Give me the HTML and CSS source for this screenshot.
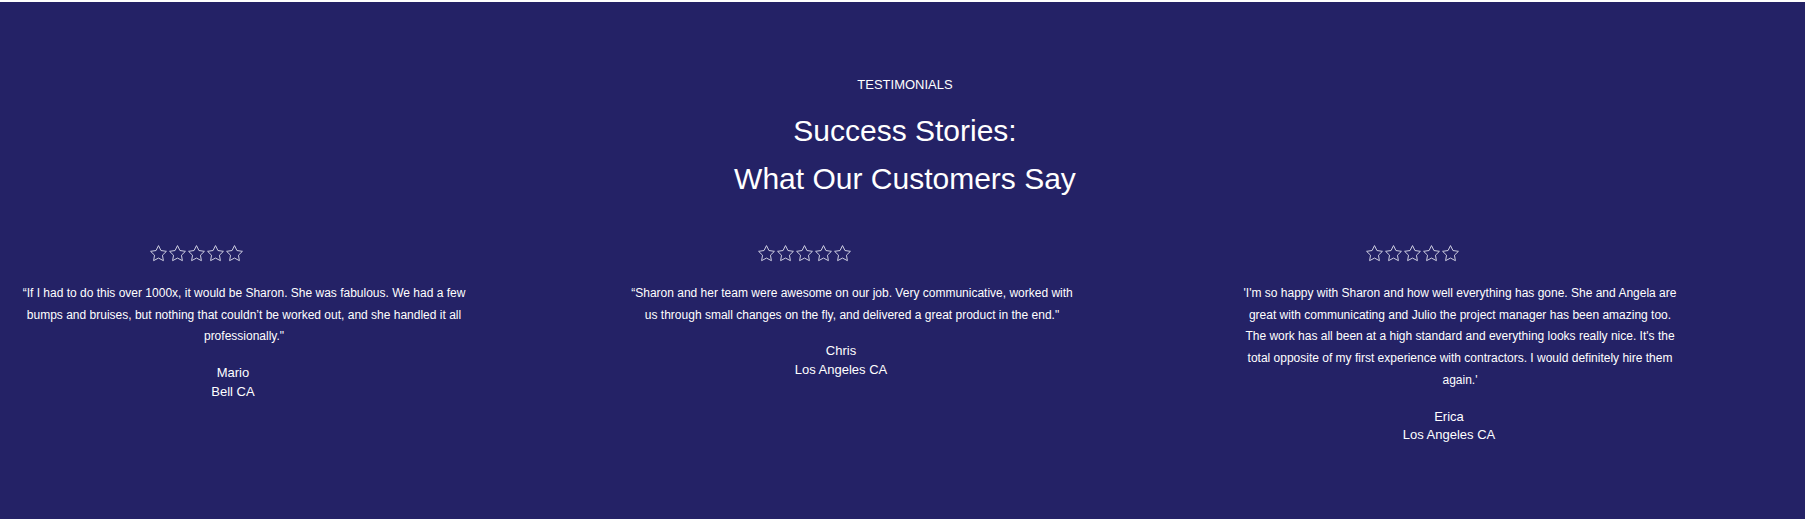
FILE: index.html
```html
<!DOCTYPE html>
<html lang="en">
<head>
<meta charset="utf-8">
<title>Testimonials</title>
<link rel="stylesheet" href="styles.css">
</head>
<body>
<section class="testimonials">
  <p class="label">TESTIMONIALS</p>
  <h2 class="heading">Success Stories:<br>What Our Customers Say</h2>
  <div class="grid">
    <article class="card">
      <div class="stars">
        <svg viewBox="0 0 24 24"><path d="M12 2l3.09 6.26L22 9.27l-5 4.87 1.18 6.88L12 17.77l-6.18 3.25L7 14.14 2 9.27l6.91-1.01L12 2z"/></svg>
        <svg viewBox="0 0 24 24"><path d="M12 2l3.09 6.26L22 9.27l-5 4.87 1.18 6.88L12 17.77l-6.18 3.25L7 14.14 2 9.27l6.91-1.01L12 2z"/></svg>
        <svg viewBox="0 0 24 24"><path d="M12 2l3.09 6.26L22 9.27l-5 4.87 1.18 6.88L12 17.77l-6.18 3.25L7 14.14 2 9.27l6.91-1.01L12 2z"/></svg>
        <svg viewBox="0 0 24 24"><path d="M12 2l3.09 6.26L22 9.27l-5 4.87 1.18 6.88L12 17.77l-6.18 3.25L7 14.14 2 9.27l6.91-1.01L12 2z"/></svg>
        <svg viewBox="0 0 24 24"><path d="M12 2l3.09 6.26L22 9.27l-5 4.87 1.18 6.88L12 17.77l-6.18 3.25L7 14.14 2 9.27l6.91-1.01L12 2z"/></svg>
      </div>
      <p class="quote">“If I had to do this over 1000x, it would be Sharon. She was fabulous. We had a few bumps and bruises, but nothing that couldn’t be worked out, and she handled it all professionally."</p>
      <p class="name">Mario<br>Bell CA</p>
    </article>
    <article class="card">
      <div class="stars">
        <svg viewBox="0 0 24 24"><path d="M12 2l3.09 6.26L22 9.27l-5 4.87 1.18 6.88L12 17.77l-6.18 3.25L7 14.14 2 9.27l6.91-1.01L12 2z"/></svg>
        <svg viewBox="0 0 24 24"><path d="M12 2l3.09 6.26L22 9.27l-5 4.87 1.18 6.88L12 17.77l-6.18 3.25L7 14.14 2 9.27l6.91-1.01L12 2z"/></svg>
        <svg viewBox="0 0 24 24"><path d="M12 2l3.09 6.26L22 9.27l-5 4.87 1.18 6.88L12 17.77l-6.18 3.25L7 14.14 2 9.27l6.91-1.01L12 2z"/></svg>
        <svg viewBox="0 0 24 24"><path d="M12 2l3.09 6.26L22 9.27l-5 4.87 1.18 6.88L12 17.77l-6.18 3.25L7 14.14 2 9.27l6.91-1.01L12 2z"/></svg>
        <svg viewBox="0 0 24 24"><path d="M12 2l3.09 6.26L22 9.27l-5 4.87 1.18 6.88L12 17.77l-6.18 3.25L7 14.14 2 9.27l6.91-1.01L12 2z"/></svg>
      </div>
      <p class="quote">“Sharon and her team were awesome on our job. Very communicative, worked with us through small changes on the fly, and delivered a great product in the end."</p>
      <p class="name">Chris<br>Los Angeles CA</p>
    </article>
    <article class="card">
      <div class="stars">
        <svg viewBox="0 0 24 24"><path d="M12 2l3.09 6.26L22 9.27l-5 4.87 1.18 6.88L12 17.77l-6.18 3.25L7 14.14 2 9.27l6.91-1.01L12 2z"/></svg>
        <svg viewBox="0 0 24 24"><path d="M12 2l3.09 6.26L22 9.27l-5 4.87 1.18 6.88L12 17.77l-6.18 3.25L7 14.14 2 9.27l6.91-1.01L12 2z"/></svg>
        <svg viewBox="0 0 24 24"><path d="M12 2l3.09 6.26L22 9.27l-5 4.87 1.18 6.88L12 17.77l-6.18 3.25L7 14.14 2 9.27l6.91-1.01L12 2z"/></svg>
        <svg viewBox="0 0 24 24"><path d="M12 2l3.09 6.26L22 9.27l-5 4.87 1.18 6.88L12 17.77l-6.18 3.25L7 14.14 2 9.27l6.91-1.01L12 2z"/></svg>
        <svg viewBox="0 0 24 24"><path d="M12 2l3.09 6.26L22 9.27l-5 4.87 1.18 6.88L12 17.77l-6.18 3.25L7 14.14 2 9.27l6.91-1.01L12 2z"/></svg>
      </div>
      <p class="quote quote-narrow">'I'm so happy with Sharon and how well everything has gone. She and Angela are great with communicating and Julio the project manager has been amazing too. The work has all been at a high standard and everything looks really nice. It's the total opposite of my first experience with contractors. I would definitely hire them again.'</p>
      <p class="name">Erica<br>Los Angeles CA</p>
    </article>
  </div>
</section>
</body>
</html>
```

FILE: styles.css
```css
html, body {
  margin: 0;
  padding: 0;
  background: #ffffff;
}

body {
  font-family: "Liberation Sans", Arial, sans-serif;
  color: #ffffff;
}

.testimonials {
  margin-top: 2px;
  background: #242266;
  padding: 73px 0 74px;
  display: flex;
  flex-direction: column;
  align-items: center;
}

.label {
  margin: 0;
  padding-left: 5px;
  font-size: 13px;
  line-height: 20px;
  text-align: center;
}

.heading {
  margin: 12px 0 0;
  padding-left: 5px;
  font-size: 30px;
  font-weight: normal;
  line-height: 48px;
  text-align: center;
}

.grid {
  align-self: flex-start;
  margin-top: 41px;
  display: grid;
  grid-template-columns: repeat(3, 488px);
  column-gap: 120px;
  align-items: start;
}

.card {
  display: flex;
  flex-direction: column;
  align-items: center;
  text-align: center;
}

.stars {
  display: flex;
  justify-content: center;
  padding-right: 96px;
}

.stars svg {
  width: 19px;
  height: 19px;
  fill: none;
  stroke: #cfcfe2;
  stroke-width: 1.25;
  stroke-linejoin: miter;
}

.quote {
  margin: 20px 0 0;
  padding: 0 20px;
  font-size: 12px;
  line-height: 21.7px;
}

.quote-narrow {
  padding: 0 24px;
}

.name {
  margin: 16px 0 0;
  padding-right: 22px;
  font-size: 13px;
  line-height: 18.5px;
}
```
